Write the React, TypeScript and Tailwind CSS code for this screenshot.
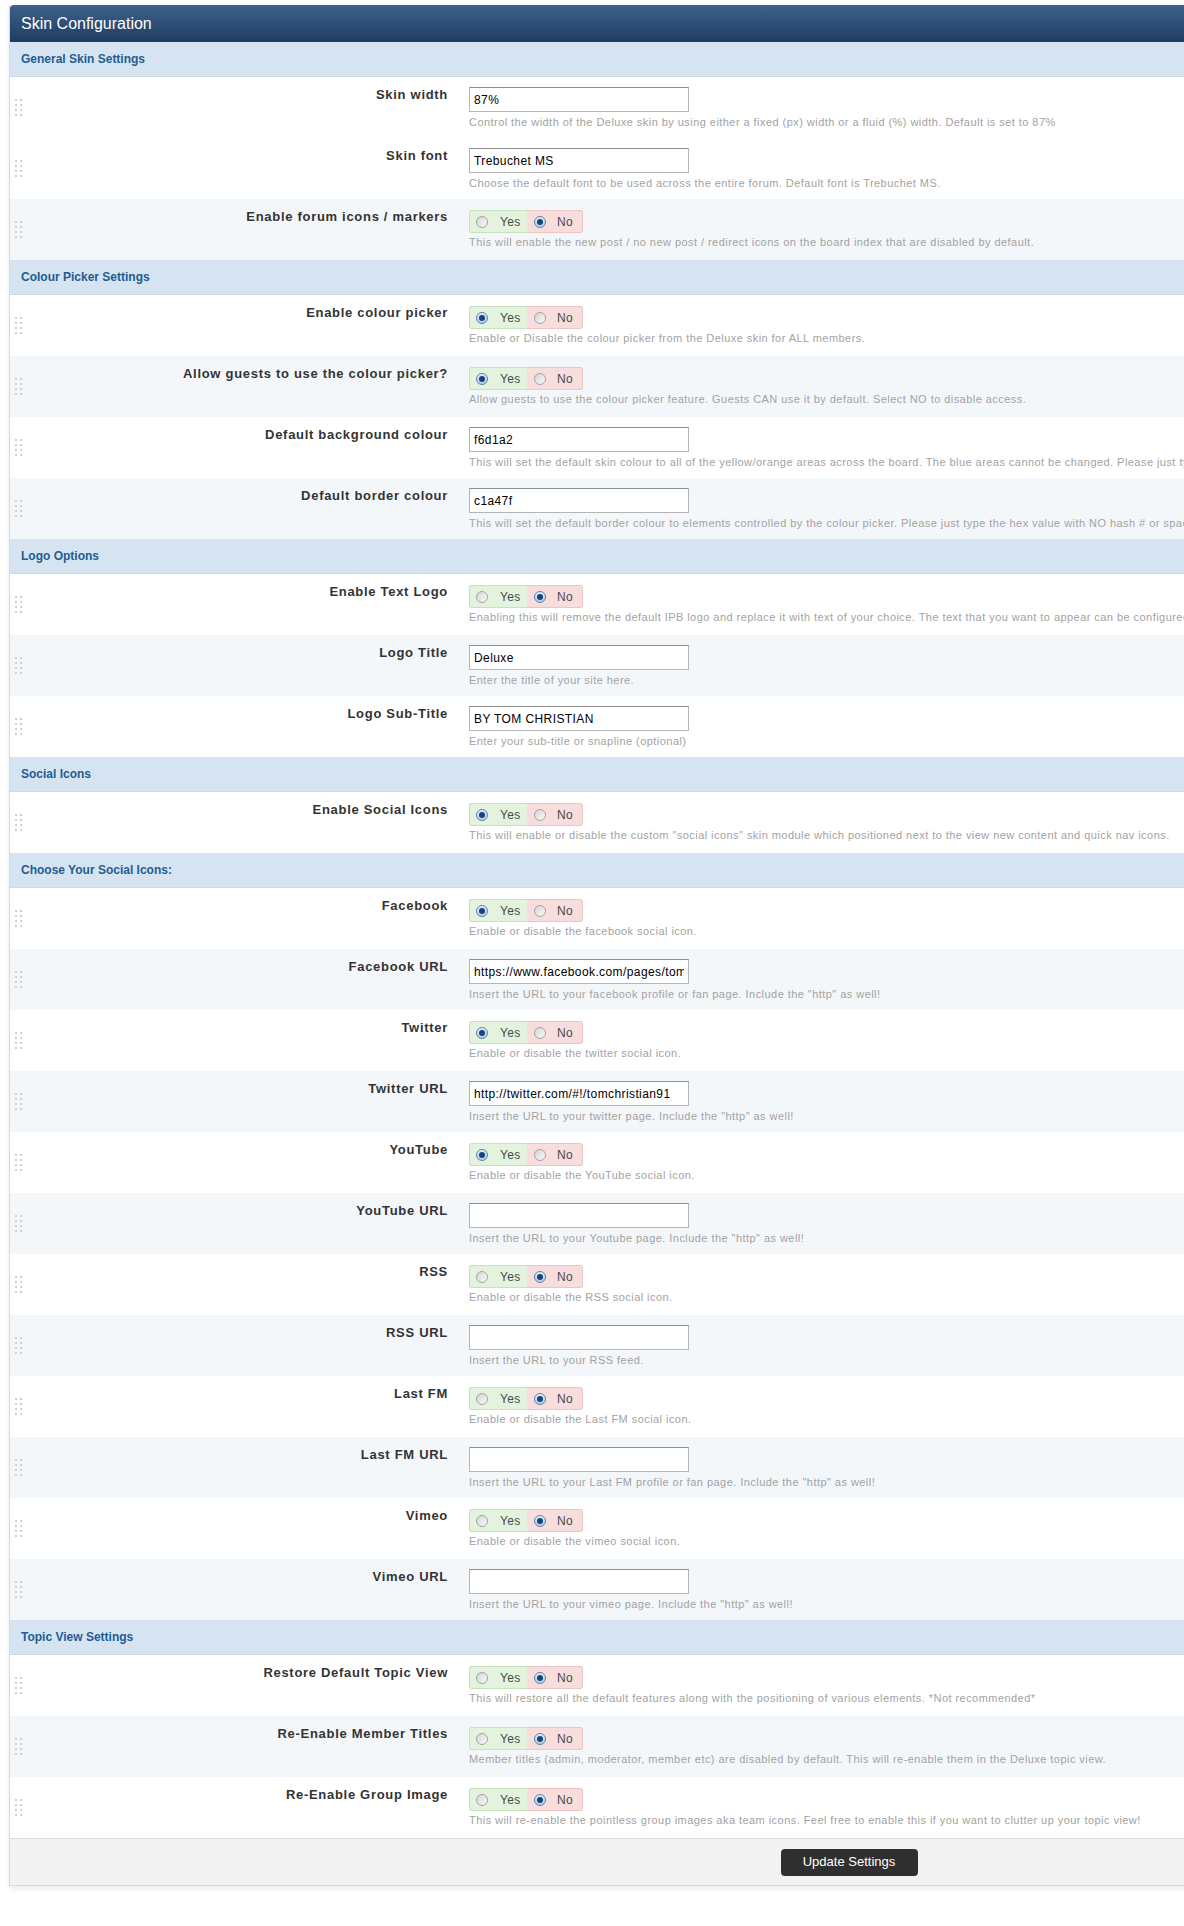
import React from "react"

type Row =
  | { label: string; kind: "text"; value: string; desc: string; alt?: boolean }
  | { label: string; kind: "yesno"; yes: boolean; desc: string; alt?: boolean }

interface Section {
  title: string
  rows: Row[]
}

const sections: Section[] = [
  {
    title: "General Skin Settings",
    rows: [
      {
        label: "Skin width",
        kind: "text",
        value: "87%",
        desc: "Control the width of the Deluxe skin by using either a fixed (px) width or a fluid (%) width. Default is set to 87%",
      },
      {
        label: "Skin font",
        kind: "text",
        value: "Trebuchet MS",
        desc: "Choose the default font to be used across the entire forum. Default font is Trebuchet MS.",
      },
      {
        label: "Enable forum icons / markers",
        kind: "yesno",
        yes: false,
        alt: true,
        desc: "This will enable the new post / no new post / redirect icons on the board index that are disabled by default.",
      },
    ],
  },
  {
    title: "Colour Picker Settings",
    rows: [
      {
        label: "Enable colour picker",
        kind: "yesno",
        yes: true,
        desc: "Enable or Disable the colour picker from the Deluxe skin for ALL members.",
      },
      {
        label: "Allow guests to use the colour picker?",
        kind: "yesno",
        yes: true,
        alt: true,
        desc: "Allow guests to use the colour picker feature. Guests CAN use it by default. Select NO to disable access.",
      },
      {
        label: "Default background colour",
        kind: "text",
        value: "f6d1a2",
        desc: "This will set the default skin colour to all of the yellow/orange areas across the board. The blue areas cannot be changed. Please just type the hex value with NO hash # or spaces.",
      },
      {
        label: "Default border colour",
        kind: "text",
        value: "c1a47f",
        alt: true,
        desc: "This will set the default border colour to elements controlled by the colour picker. Please just type the hex value with NO hash # or spaces.",
      },
    ],
  },
  {
    title: "Logo Options",
    rows: [
      {
        label: "Enable Text Logo",
        kind: "yesno",
        yes: false,
        desc: "Enabling this will remove the default IPB logo and replace it with text of your choice. The text that you want to appear can be configured below.",
      },
      {
        label: "Logo Title",
        kind: "text",
        value: "Deluxe",
        alt: true,
        desc: "Enter the title of your site here.",
      },
      {
        label: "Logo Sub-Title",
        kind: "text",
        value: "BY TOM CHRISTIAN",
        desc: "Enter your sub-title or snapline (optional)",
      },
    ],
  },
  {
    title: "Social Icons",
    rows: [
      {
        label: "Enable Social Icons",
        kind: "yesno",
        yes: true,
        desc: 'This will enable or disable the custom "social icons" skin module which positioned next to the view new content and quick nav icons.',
      },
    ],
  },
  {
    title: "Choose Your Social Icons:",
    rows: [
      { label: "Facebook", kind: "yesno", yes: true, desc: "Enable or disable the facebook social icon." },
      {
        label: "Facebook URL",
        kind: "text",
        value: "https://www.facebook.com/pages/tomchristian",
        alt: true,
        desc: 'Insert the URL to your facebook profile or fan page. Include the "http" as well!',
      },
      { label: "Twitter", kind: "yesno", yes: true, desc: "Enable or disable the twitter social icon." },
      {
        label: "Twitter URL",
        kind: "text",
        value: "http://twitter.com/#!/tomchristian91",
        alt: true,
        desc: 'Insert the URL to your twitter page. Include the "http" as well!',
      },
      { label: "YouTube", kind: "yesno", yes: true, desc: "Enable or disable the YouTube social icon." },
      {
        label: "YouTube URL",
        kind: "text",
        value: "",
        alt: true,
        desc: 'Insert the URL to your Youtube page. Include the "http" as well!',
      },
      { label: "RSS", kind: "yesno", yes: false, desc: "Enable or disable the RSS social icon." },
      { label: "RSS URL", kind: "text", value: "", alt: true, desc: "Insert the URL to your RSS feed." },
      { label: "Last FM", kind: "yesno", yes: false, desc: "Enable or disable the Last FM social icon." },
      {
        label: "Last FM URL",
        kind: "text",
        value: "",
        alt: true,
        desc: 'Insert the URL to your Last FM profile or fan page. Include the "http" as well!',
      },
      { label: "Vimeo", kind: "yesno", yes: false, desc: "Enable or disable the vimeo social icon." },
      {
        label: "Vimeo URL",
        kind: "text",
        value: "",
        alt: true,
        desc: 'Insert the URL to your vimeo page. Include the "http" as well!',
      },
    ],
  },
  {
    title: "Topic View Settings",
    rows: [
      {
        label: "Restore Default Topic View",
        kind: "yesno",
        yes: false,
        desc: "This will restore all the default features along with the positioning of various elements. *Not recommended*",
      },
      {
        label: "Re-Enable Member Titles",
        kind: "yesno",
        yes: false,
        alt: true,
        desc: "Member titles (admin, moderator, member etc) are disabled by default. This will re-enable them in the Deluxe topic view.",
      },
      {
        label: "Re-Enable Group Image",
        kind: "yesno",
        yes: false,
        desc: "This will re-enable the pointless group images aka team icons. Feel free to enable this if you want to clutter up your topic view!",
      },
    ],
  },
]

function Radio({ checked }: { checked: boolean }) {
  if (checked) {
    return (
      <span className="flex h-[12px] w-[12px] shrink-0 items-center justify-center rounded-full border border-[#5f82ad] bg-linear-to-b from-[#e4edf7] to-[#b8cce4]">
        <span className="h-[6px] w-[6px] rounded-full bg-[#13467f]" />
      </span>
    )
  }
  return (
    <span className="h-[12px] w-[12px] shrink-0 rounded-full border border-[#a3a3a3] bg-linear-to-br from-[#d4d4d4] to-[#fbfbfb]" />
  )
}

function YesNo({ yes }: { yes: boolean }) {
  return (
    <div className="flex h-[23px] text-[12px] tracking-[0.3px] text-[#4a4a4a]">
      <label className="flex w-[58px] items-center rounded-l-[3px] border border-r-0 border-[#c5e2bc] bg-[#e3f3de] pl-[6px]">
        <Radio checked={yes} />
        <span className="ml-[12px]">Yes</span>
      </label>
      <label className="flex w-[56px] items-center rounded-r-[3px] border border-l-0 border-[#efc4c4] bg-[#f8dddd] pl-[7px]">
        <Radio checked={!yes} />
        <span className="ml-[11px]">No</span>
      </label>
    </div>
  )
}

function Handle() {
  return (
    <div className="ml-[5px] grid grid-cols-2 gap-[3px] self-center">
      {Array.from({ length: 8 }).map((_, i) => (
        <span key={i} className="h-[2px] w-[2px] bg-[#d0d0d0]" />
      ))}
    </div>
  )
}

function SettingRow({ row }: { row: Row }) {
  return (
    <div className={`flex h-[61px] ${row.alt ? "bg-[#f4f7fa]" : "bg-white"}`}>
      <div className="flex w-[438px] shrink-0">
        <Handle />
        <div className="flex-1 pt-[10px] text-right text-[13px] font-bold leading-[16px] tracking-[0.7px] text-[#333]">
          {row.label}
        </div>
      </div>
      <div className={`pl-[21px] ${row.kind === "text" ? "pt-[10px]" : "pt-[11px]"}`}>
        {row.kind === "text" ? (
          <input
            type="text"
            readOnly
            defaultValue={row.value}
            className="block h-[25px] w-[220px] border border-[#b5b5b5] border-t-[#8f8f8f] bg-white px-[4px] text-[12px] tracking-[0.4px] text-black outline-none"
          />
        ) : (
          <YesNo yes={row.yes} />
        )}
        <p
          className={`whitespace-nowrap text-[11px] leading-[14px] tracking-[0.45px] text-[#a2a2a2] ${
            row.kind === "text" ? "mt-[3px]" : "mt-[2px]"
          }`}
        >
          {row.desc}
        </p>
      </div>
    </div>
  )
}

export default function App() {
  return (
    <div className="min-h-[1926px] w-[1184px] overflow-hidden bg-white pl-[9px] pt-[5px] font-['Liberation_Sans',Arial,sans-serif]">
      <div className="w-[1679px] border-l border-[#d9d9d9] shadow-[0_3px_6px_rgba(0,0,0,0.08)]">
        <div className="flex h-[37px] items-center rounded-tl-[4px] bg-linear-to-b from-[#3d618b] to-[#1f3d63] pl-[11px] text-[16px] text-white">
          Skin Configuration
        </div>

        {sections.map((section) => (
          <div key={section.title}>
            <div className="flex h-[35px] items-center border-b border-[#c9d9e8] bg-[#d6e4f1] pl-[11px] text-[12px] font-bold text-[#235d92]">
              {section.title}
            </div>
            {section.rows.map((row) => (
              <SettingRow key={row.label} row={row} />
            ))}
          </div>
        ))}

        <div className="flex h-[48px] items-center justify-center border-t border-b border-[#dadada] bg-[#f3f3f3]">
          <button
            type="button"
            className="h-[27px] w-[137px] rounded-[4px] bg-[#2f2f2f] text-[13px] text-white"
          >
            Update Settings
          </button>
        </div>
      </div>
    </div>
  )
}
